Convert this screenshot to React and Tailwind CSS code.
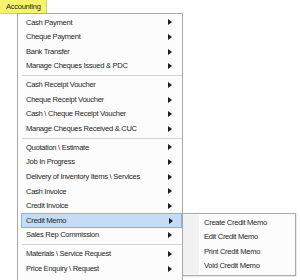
import React from 'react';

const groups = [
  ['Cash Payment', 'Cheque Payment', 'Bank Transfer', 'Manage Cheques Issued & PDC'],
  ['Cash Receipt Voucher', 'Cheque Receipt Voucher', 'Cash \\ Cheque Receipt Voucher', 'Manage Cheques Received & CUC'],
  ['Quotation \\ Estimate', 'Job In Progress', 'Delivery of Inventory Items \\ Services', 'Cash Invoice', 'Credit Invoice', 'Credit Memo', 'Sales Rep Commission'],
  ['Materials \\ Service Request', 'Price Enquiry \\ Request'],
];

const subItems = ['Create Credit Memo', 'Edit Credit Memo', 'Print Credit Memo', 'Void Credit Memo'];

const Arrow = () => (
  <svg width="4" height="6" viewBox="0 0 4 6" className="shrink-0">
    <path d="M0 0 L4 3 L0 6 Z" fill="#1b1b1b" />
  </svg>
);

const MenuRow = ({ label }) => {
  const active = label === 'Credit Memo';
  return (
    <div
      className={
        active
          ? 'h-[14.65px] ml-[3px] pl-[4px] pr-[8px] flex items-center justify-between bg-[#c4dcf5] border border-[#88b3e2]'
          : 'h-[14.65px] ml-[3px] pl-[4px] pr-[9px] flex items-center justify-between border border-transparent'
      }
    >
      <span className="leading-none">{label}</span>
      <Arrow />
    </div>
  );
};

const Separator = () => (
  <div className="h-[4px] ml-[4px] flex flex-col justify-center">
    <div className="h-px bg-[#d5d5d5]" />
  </div>
);

export default function App() {
  return (
    <div
      className="w-[300px] h-[280px] bg-white relative overflow-hidden text-[7.6px] tracking-[-0.3px] text-[#262626]"
      style={{ fontFamily: '"Liberation Sans", Arial, sans-serif' }}
    >
      <div className="h-[14px] w-[47px] bg-[#f7f46b] border-r border-b border-[#d6cf7a] flex items-center pl-[6px]">
        <span className="leading-none">Accounting</span>
      </div>

      <div className="-mt-px ml-[17px] w-[166px] bg-[#fcfcfc] border border-[#a9a9a9] pt-px pb-[4px]">
        {groups.map((g, i) => (
          <React.Fragment key={i}>
            {i > 0 && <Separator />}
            {g.map((label) => (
              <MenuRow key={label} label={label} />
            ))}
          </React.Fragment>
        ))}
      </div>

      <div className="absolute left-[182px] top-[213px] w-[114px] bg-[#fcfcfc] border border-[#a9a9a9] py-px flex shadow-[1px_1px_1px_rgba(0,0,0,0.08)]">
        <div className="w-[16px] bg-[#f1f1f1]" />
        <div className="flex-1 pl-[5px]">
          {subItems.map((s) => (
            <div key={s} className="h-[14.65px] flex items-center">
              <span className="leading-none">{s}</span>
            </div>
          ))}
        </div>
      </div>
    </div>
  );
}
